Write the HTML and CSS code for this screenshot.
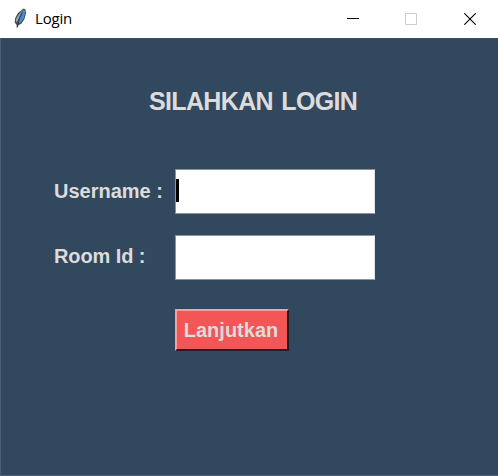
FILE: index.html
```html
<!DOCTYPE html>
<html lang="id">
<head>
<meta charset="utf-8">
<title>Login</title>
<link rel="stylesheet" href="styles.css">
</head>
<body>
<div class="window">
  <header class="titlebar">
    <svg class="feather" width="14" height="20" viewBox="0 0 14 20">
      <path d="M10.5 .5 12.5 1.5 13 5 11.5 11 8.5 15.5 5 17.5 4.8 19.5 3.5 19.5 3.7 17 1.7 14.5 2.2 10 5 5Z" fill="#454b52"/>
      <path d="M10.3 1.5 12.2 3 11.2 9.5 8 14.5 5.2 15.5 6 10Z" fill="#4a8ad0"/>
      <path d="M9.7 1.8 6.2 6 3 11 3.2 14.5 4.5 13 6.5 8Z" fill="#9cacbc"/>
      <path d="M9.5 4.5 6.5 10.5 4.4 18.8" fill="none" stroke="#182230" stroke-width=".7"/>
    </svg>
    <span class="title">Login</span>
    <div class="controls">
      <svg class="control" width="12" height="12" viewBox="0 0 12 12"><path d="M0 5.5H12" stroke="#000"/></svg>
      <svg class="control disabled" width="12" height="12" viewBox="0 0 12 12"><path d="M.5.5H11.5V11.5H.5Z" fill="none" stroke="#ccc"/></svg>
      <svg class="control" width="12" height="12" viewBox="0 0 12 12"><path d="M.3.3 11.7 11.7M11.7.3.3 11.7" stroke="#000" stroke-width="1.1"/></svg>
    </div>
  </header>
  <main class="content">
    <h1 class="heading">SILAHKAN LOGIN</h1>
    <form class="form">
      <span class="label">Username :</span>
      <div class="entry"><span class="caret"></span></div>
      <span class="label label-room">Room Id :</span>
      <div class="entry"></div>
      <button class="submit" type="button">Lanjutkan</button>
    </form>
  </main>
</div>
</body>
</html>
```
FILE: styles.css
```css
* {
  box-sizing: border-box;
}

body {
  margin: 0;
  font-family: "Liberation Sans", Arial, sans-serif;
}

.window {
  display: flex;
  flex-direction: column;
  width: 498px;
  height: 476px;
  background: #fff;
}

.titlebar {
  display: flex;
  align-items: center;
  height: 38px;
  padding: 0 22px 0 13px;
}

.feather {
  margin-bottom: 3px;
}

.title {
  margin: 0 0 2px 8px;
  font: 15px/20px "Open Sans", "Noto Sans", sans-serif;
  letter-spacing: -0.2px;
  color: #000;
}

.controls {
  display: flex;
  gap: 46px;
  margin-left: auto;
}

.disabled {
  margin-right: 1px;
}

.content {
  flex: 1;
  padding: 47px 0 0 53px;
  background: #32485e;
  border: solid #4b6078;
  border-width: 1px 0 1px 1px;
  border-top-color: #3b5064;
  color: #dcdcdc;
}

.heading {
  margin: 0 0 0 95px;
  font-size: 25px;
  letter-spacing: -0.65px;
  word-spacing: 2px;
  line-height: 30px;
  white-space: nowrap;
}

.form {
  display: grid;
  grid-template-columns: 121px 200px;
  grid-template-rows: 45px 45px 42px;
  row-gap: 21px;
  align-items: center;
  margin-top: 53px;
}

.label {
  padding-bottom: 1px;
  font-size: 20px;
  font-weight: bold;
  line-height: 24px;
  white-space: nowrap;
}

.label-room {
  padding-bottom: 3px;
  letter-spacing: -0.1px;
}

.entry {
  height: 45px;
  padding: 9px 0 0;
  background: #fff;
  border: 1px solid #8e9399;
  border-right-color: #dfe3e7;
}

.caret {
  display: block;
  width: 3px;
  height: 23px;
  background: #000;
}

.submit {
  grid-column: 2;
  justify-self: start;
  width: 114px;
  height: 42px;
  padding: 0 2px 0 0;
  margin-top: 16px;
  background: #f25656;
  border: 2px solid;
  border-color: #f6a0a0 #251b22 #251b22 #f6a0a0;
  color: #dcdcdc;
  font: bold 20px/24px "Liberation Sans", Arial, sans-serif;
}
```
